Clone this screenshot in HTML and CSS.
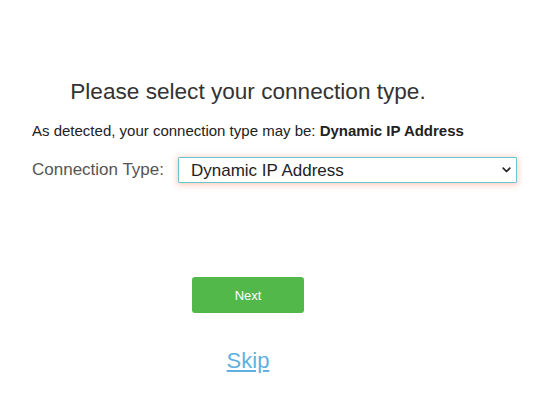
FILE: index.html
```html
<!DOCTYPE html>
<html lang="en">
<head>
<meta charset="utf-8">
<title>Connection Type</title>
<link rel="stylesheet" href="styles.css">
</head>
<body>
<main class="page">
  <h1 class="title">Please select your connection type.</h1>
  <p class="detected">As detected, your connection type may be: <strong>Dynamic IP Address</strong></p>
  <div class="row">
    <label class="label" for="conn">Connection Type:</label>
    <div class="select-wrap">
      <select id="conn" class="select">
        <option>Dynamic IP Address</option>
        <option>Static IP Address</option>
        <option>PPPoE</option>
      </select>
      <svg class="chevron" width="9" height="6" viewBox="0 0 9 6" aria-hidden="true">
        <path d="M1.2 1.2 L4.5 4.5 L7.8 1.2" fill="none" stroke="#222" stroke-width="1.7" stroke-linecap="round" stroke-linejoin="round"/>
      </svg>
    </div>
  </div>
  <div class="actions">
    <button class="next" type="button">Next</button>
    <a class="skip" href="#">Skip</a>
  </div>
</main>
</body>
</html>
```

FILE: styles.css
```css
html, body {
  margin: 0;
  padding: 0;
  background: #ffffff;
}

body {
  font-family: "Liberation Sans", Arial, sans-serif;
  color: #333333;
}

.page {
  width: 432px;
  padding: 79px 0 0 32px;
}

.title {
  margin: 0;
  font-size: 22.6px;
  font-weight: normal;
  line-height: 25px;
  text-align: center;
  color: #333333;
}

.detected {
  margin: 18px 0 0;
  font-size: 15px;
  line-height: 17px;
  color: #222222;
  white-space: nowrap;
}

.detected strong {
  font-weight: bold;
}

.row {
  margin-top: 18px;
  display: flex;
  align-items: center;
  gap: 14px;
}

.label {
  font-size: 17px;
  line-height: 20px;
  color: #555555;
  flex-shrink: 0;
}

.select-wrap {
  position: relative;
  flex-shrink: 0;
  width: 339px;
  height: 26px;
}

.select {
  -webkit-appearance: none;
  appearance: none;
  box-sizing: border-box;
  width: 339px;
  height: 26px;
  margin: 0;
  padding: 0 24px 0 12px;
  border: 1px solid #6cc5cc;
  border-radius: 1px;
  background: #ffffff;
  font-family: "Liberation Sans", Arial, sans-serif;
  font-size: 17px;
  color: #222222;
  box-shadow: 0 1px 6px 1px rgba(246, 140, 110, 0.45);
  outline: none;
}

.chevron {
  position: absolute;
  right: 6px;
  top: 10px;
  pointer-events: none;
}

.actions {
  display: flex;
  flex-direction: column;
  align-items: center;
}

.next {
  margin-top: 94px;
  width: 112px;
  height: 36px;
  border: none;
  border-radius: 3px;
  background: #52b84a;
  color: #ffffff;
  font-family: "Liberation Sans", Arial, sans-serif;
  font-size: 13px;
  cursor: pointer;
}

.skip {
  margin-top: 35px;
  font-size: 22px;
  line-height: 25px;
  color: #62b0e0;
  text-decoration: underline;
}
```
